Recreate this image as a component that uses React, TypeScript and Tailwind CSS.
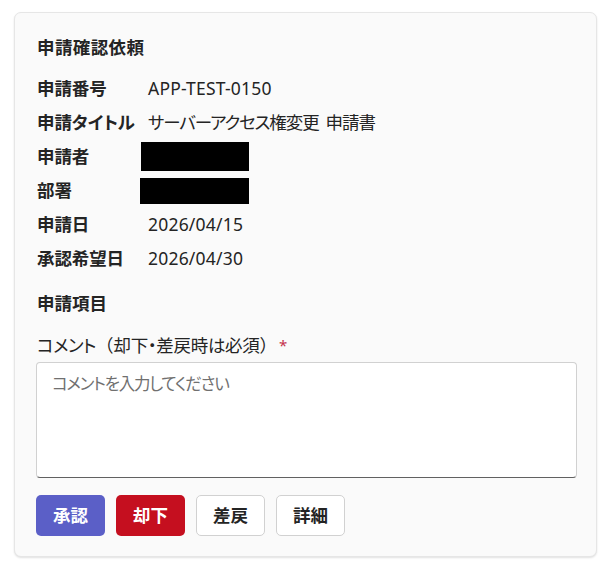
import React from "react";

const rows: { label: string; value?: string; redact?: "a" | "b"; tight?: boolean }[] = [
  { label: "申請番号", value: "APP-TEST-0150" },
  { label: "申請タイトル", value: "サーバーアクセス権変更 申請書", tight: true },
  { label: "申請者", redact: "a" },
  { label: "部署", redact: "b" },
  { label: "申請日", value: "2026/04/15" },
  { label: "承認希望日", value: "2026/04/30" },
];

export default function App() {
  return (
    <div
      className="w-[612px] h-[569px] bg-white pt-[12px] pl-[14px] text-[#242424] text-[17.5px] [font-feature-settings:'palt'] [font-family:'Noto_Sans','Noto_Sans_CJK_JP',sans-serif]"
    >
      <div className="w-[583px] h-[545px] bg-[#fafafa] border border-[#e6e6e6] rounded-[7px] shadow-[0_1px_2px_rgba(0,0,0,0.12)] px-[22px] pt-[22px] flex flex-col">
        <div className="h-[24px] leading-[24px] font-bold tracking-[0.4px]">申請確認依頼</div>
        <div className="mt-[17px] flex flex-col gap-[10px]">
          {rows.map((r) => (
            <div key={r.label} className="h-[24px] flex items-center leading-[24px]">
              <div className="w-[111px] shrink-0 font-bold whitespace-nowrap tracking-[-0.1px]">{r.label}</div>
              {r.value && (
                <div className={r.tight ? "whitespace-nowrap tracking-[-1.1px]" : "whitespace-nowrap tracking-[0.2px]"}>
                  {r.tight ? (
                    <>
                      サーバーアクセス権変更<span className="inline-block w-[7px]" />申請書
                    </>
                  ) : (
                    r.value
                  )}
                </div>
              )}
              {r.redact === "a" && <div className="ml-[-7px] w-[108px] h-[29px] shrink-0 bg-black" />}
              {r.redact === "b" && <div className="ml-[-8px] mt-[1px] w-[109px] h-[26px] shrink-0 bg-black" />}
            </div>
          ))}
        </div>
        <div className="mt-[21px] h-[24px] leading-[24px] font-bold">申請項目</div>
        <div className="mt-[18px] h-[24px] leading-[24px] flex items-center whitespace-nowrap">
          <span className="tracking-[-0.5px]">コメント</span>
          <span className="[font-feature-settings:normal]">（</span>
          <span className="tracking-[-0.3px]">却下・差戻時は必須</span>
          <span className="[font-feature-settings:normal]">）</span>
          <span className="ml-[2px] text-[#c4314b] text-[15px]">*</span>
        </div>
        <textarea
          className="mt-[5px] ml-[-1px] w-[541px] h-[116px] resize-none bg-white border border-[#d1d1d1] border-b-[#616161] rounded-[4px] px-[15px] pt-[9px] leading-[24px] outline-none text-[16.5px] tracking-[-1.2px] placeholder:text-[#707070]"
          placeholder="コメントを入力してください"
        />
        <div className="mt-[17px] ml-[-1px] flex gap-[11px]">
          <button className="w-[69px] h-[41px] rounded-[5px] bg-[#5b5fc7] text-white font-bold">承認</button>
          <button className="w-[69px] h-[41px] rounded-[5px] bg-[#c50f1f] text-white font-bold">却下</button>
          <button className="w-[69px] h-[41px] rounded-[5px] bg-white border border-[#d1d1d1] font-bold">差戻</button>
          <button className="w-[69px] h-[41px] rounded-[5px] bg-white border border-[#d1d1d1] font-bold">詳細</button>
        </div>
      </div>
    </div>
  );
}
